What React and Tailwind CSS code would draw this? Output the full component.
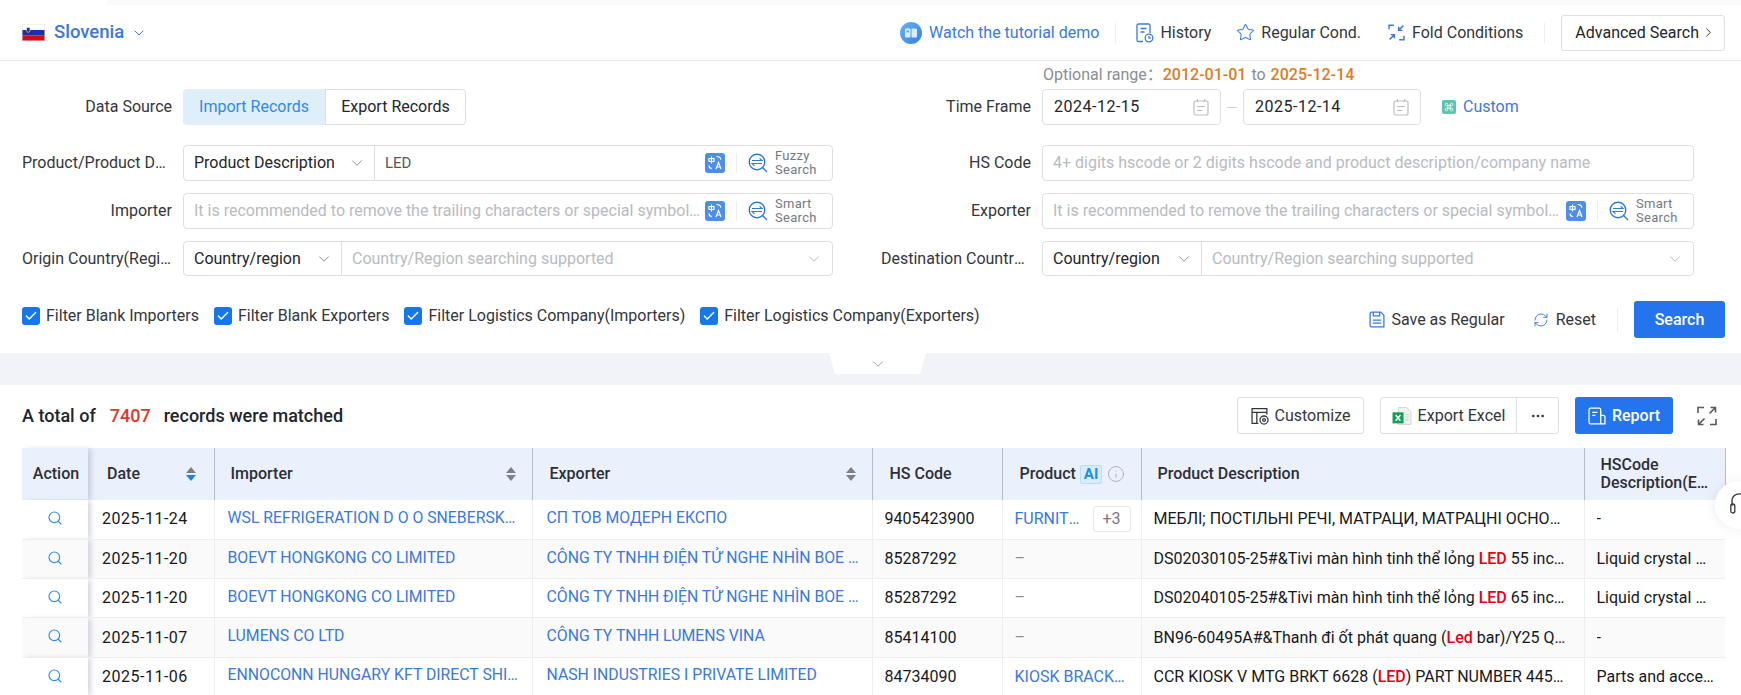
import { ChevronDown, ChevronRight, Search, Ellipsis, Info, Star, RefreshCw, Check, Command } from "lucide-react";

function Flag() {
  return (
    <svg width="23" height="17" viewBox="0 0 23 17" className="shrink-0">
      <rect width="23" height="17" fill="#e5e5e5" />
      <rect x="0.5" y="0.5" width="22" height="5.5" fill="#fff" />
      <rect x="0.5" y="6" width="22" height="5.5" fill="#1c2fa8" />
      <rect x="0.5" y="11.5" width="22" height="5" fill="#d20c14" />
      <path d="M4.500 3.500h3.500v3c0 1-1 1.500-1.750 2C5.500 8 4.500 7.500 4.500 6.500z" fill="#1c2fa8" stroke="#fff" strokeWidth="0.6" />
    </svg>
  );
}

function WatchIcon() {
  return (
    <svg width="22" height="22" viewBox="0 0 22 22" className="shrink-0">
      <defs>
        <linearGradient id="watchGrad" x1="0" y1="0" x2="1" y2="1">
          <stop offset="0" stopColor="#6db3f2" />
          <stop offset="1" stopColor="#2f7fe8" />
        </linearGradient>
      </defs>
      <circle cx="11" cy="11" r="11" fill="url(#watchGrad)" />
      <rect x="5" y="6.500" width="5.500" height="9" rx="1" fill="#dcecfc" />
      <rect x="11.500" y="6.500" width="5.500" height="9" rx="1" fill="#dcecfc" />
      <rect x="6.500" y="8.500" width="2.500" height="2" fill="#5fa5ee" />
    </svg>
  );
}

function HistoryIcon() {
  return (
    <svg width="18" height="20" viewBox="0 0 18 20" fill="none" stroke="#3b78dc" strokeWidth="1.300" className="shrink-0">
      <path d="M7 18.500H2.500a1.500 1.500 0 0 1-1.500-1.500V2.500A1.500 1.500 0 0 1 2.500 1h10A1.500 1.500 0 0 1 14 2.500V10" />
      <path d="M4.500 5.500h6M4.500 9h4" />
      <circle cx="13" cy="15" r="3.800" />
      <path d="M13 13v2.200h1.800" />
    </svg>
  );
}

function FoldIcon() {
  return (
    <svg width="17" height="17" viewBox="0 0 16 16" fill="none" stroke="#3b78dc" strokeWidth="1.400" className="shrink-0">
      <path d="M1 5V1.200h4.500M15 11v3.800h-4.500" />
      <path d="M14.500 1.500L10 6M10 2.500V6h3.500" />
      <path d="M1.500 14.500L6 10M6 13.500V10H2.500" />
    </svg>
  );
}

function ExpandIcon() {
  return (
    <svg width="20" height="20" viewBox="0 0 20 20" fill="none" stroke="#55595f" strokeWidth="1.600" className="shrink-0">
      <path d="M1 7V1.500h6" />
      <path d="M19 13v5.500h-6" />
      <path d="M12.500 7.500L18.500 1.500M13.500 1.500h5v5" />
      <path d="M7.500 12.500L1.500 18.500M6.500 18.500h-5v-5" />
    </svg>
  );
}

function TranslateIcon() {
  return (
    <div className="w-5 h-5 rounded-[3px] bg-[#4d8ee8] flex items-center justify-center shrink-0">
      <svg width="16" height="16" viewBox="0 0 16 16" fill="none" stroke="#fff" strokeWidth="1.200">
        <path d="M2 3.500h5v3H2zM4.500 1.500v7M2 10.500c0 2 1 3 3 3M9.500 1.500c2.500 0 4 1 4.500 3" />
        <path d="M9 14l2.500-6.500L14 14M10 12h3" />
      </svg>
    </div>
  );
}

function MatchIcon() {
  return (
    <svg width="20" height="20" viewBox="0 0 20 20" fill="none" stroke="#2f79dc" strokeWidth="1.400" className="shrink-0">
      <circle cx="9" cy="9" r="7.800" />
      <path d="M14.500 14.500L19 19" />
      <path d="M4 7.500h10l-2.500-2.300M14 10.500H4l2.500 2.300" strokeWidth="1.100" />
    </svg>
  );
}

function CalendarIcon() {
  return (
    <svg width="16" height="18" viewBox="0 0 16 18" fill="none" stroke="#b9bcc1" strokeWidth="1.200" className="shrink-0">
      <rect x="1" y="3" width="14" height="14" rx="1.500" />
      <path d="M4.500 1v3M11.500 1v3M4 8.500h8M4 12.500h5" />
    </svg>
  );
}

function SaveIcon() {
  return (
    <svg width="16" height="17" viewBox="0 0 15 16" fill="none" stroke="#3b78dc" strokeWidth="1.200" className="shrink-0">
      <path d="M1 2.500A1.500 1.500 0 0 1 2.500 1H11l3 3v10.500a.5.5 0 0 1-.5.5h-11A1.500 1.500 0 0 1 1 13.500z" />
      <path d="M4 1v3.500h6V1M3.500 8.500h8M3.500 11.500h8" />
    </svg>
  );
}

function CustomizeIcon() {
  return (
    <svg width="18" height="18" viewBox="0 0 17 17" fill="none" stroke="#33363b" strokeWidth="1.200" className="shrink-0">
      <path d="M7 15.500H1V1.500h14V7M1 5h14M5.500 5v10.500" />
      <circle cx="12.300" cy="12.300" r="3.800" />
      <circle cx="12.300" cy="12.300" r="1.300" />
    </svg>
  );
}

function ExcelIcon() {
  return (
    <svg width="20" height="20" viewBox="0 0 19 19" className="shrink-0">
      <path d="M6 1.500h8l4 4v12H6z" fill="#f2f4f3" stroke="#c9cdcb" strokeWidth="0.800" />
      <path d="M12.500 8h3.500M12.500 10.500h3.500M12.500 13h3.500" stroke="#c2c6c4" strokeWidth="0.800" />
      <rect x="0.500" y="6" width="10.500" height="10.500" fill="#12a05c" />
      <path d="M3.500 8.500l4.500 5.500M8 8.500l-4.500 5.500" stroke="#fff" strokeWidth="1.300" />
    </svg>
  );
}

function ReportIcon() {
  return (
    <svg width="18" height="18" viewBox="0 0 17 17" fill="none" stroke="#fff" strokeWidth="1.200" className="shrink-0">
      <path d="M12 16H2.500A1.500 1.500 0 0 1 1 14.500v-12A1.500 1.500 0 0 1 2.500 1H10.500A1.500 1.500 0 0 1 12 2.500V16zM12 8h2.500A1.500 1.500 0 0 1 16 9.500V16h-4" />
      <path d="M4 5h5M4 8h3" />
    </svg>
  );
}

function SortIcon({ active }) {
  return (
    <div className="flex flex-col gap-[2px] items-center shrink-0">
      <div className="w-0 h-0 border-x-[5px] border-x-transparent border-b-[6px] border-b-[#7d8087]" />
      <div
        className={`w-0 h-0 border-x-[5px] border-x-transparent border-t-[6px] ${
          active ? "border-t-[#1e80e8]" : "border-t-[#7d8087]"
        }`}
      />
    </div>
  );
}

function FieldLabel({ children }) {
  return (
    <div className="w-[150px] shrink-0 text-right truncate text-[#33363b]">{children}</div>
  );
}

function SelectBox({ label, width }) {
  return (
    <div className={`flex items-center justify-between pl-[10px] pr-[8px] text-[#22252a] border-r border-[#dcdfe3] h-full shrink-0 ${width}`}>
      <span>{label}</span>
      <ChevronDown size={18} strokeWidth={1.200} className="text-[#7e8288]" />
    </div>
  );
}

function MatchButton({ label }) {
  return (
    <div className="flex items-center h-full shrink-0">
      <div className="w-5 flex justify-center mr-[11px] ml-[4px]">
        <TranslateIcon />
      </div>
      <div className="w-px h-5 bg-[#eceef0]" />
      <div className="flex items-center ml-[11px] w-[84px]">
        <MatchIcon />
        <div className="ml-[7px] text-[13px] leading-[14px] tracking-[0.3px] text-[#75797f]">
          {label}
          <br />
          Search
        </div>
      </div>
    </div>
  );
}

function InputRow({ placeholder, label }) {
  return (
    <div className="flex items-center flex-1 min-w-0 h-9 border border-[#dcdfe3] rounded-[4px] bg-white">
      <div className="flex-1 min-w-0 pl-[10px] truncate text-[#b8bbc0]">{placeholder}</div>
      <MatchButton label={label} />
    </div>
  );
}

function CountryRow({ selectWidth }) {
  return (
    <div className="flex items-center flex-1 min-w-0 h-[35px] border border-[#dcdfe3] rounded-[4px]">
      <SelectBox label="Country/region" width={selectWidth} />
      <div className="flex-1 px-[10px] truncate text-[#b8bbc0]">Country/Region searching supported</div>
      <ChevronDown size={18} strokeWidth={1.200} className="shrink-0 text-[#b0b3b8] mr-[9px]" />
    </div>
  );
}

function CheckItem({ children }) {
  return (
    <div className="flex items-center gap-[6px] whitespace-nowrap">
      <div className="w-[18px] h-[18px] rounded-[3px] bg-[#1677e8] flex items-center justify-center">
        <Check size={14} strokeWidth={2.400} className="text-white" />
      </div>
      <span className="text-[#33363b]">{children}</span>
    </div>
  );
}

const rows = [
  {
    date: "2025-11-24",
    importer: "WSL REFRIGERATION D O O SNEBERSKA CESTA",
    exporter: "СП ТОВ МОДЕРН ЕКСПО",
    hs: "9405423900",
    product: "FURNITURE",
    more: "+3",
    desc: ["МЕБЛІ; ПОСТІЛЬНІ РЕЧІ, МАТРАЦИ, МАТРАЦНІ ОСНОВИ, ПОДУШКИ"],
    hsDesc: "-",
  },
  {
    date: "2025-11-20",
    importer: "BOEVT HONGKONG CO LIMITED",
    exporter: "CÔNG TY TNHH ĐIỆN TỬ NGHE NHÌN BOE VIỆT NAM",
    hs: "85287292",
    product: "",
    desc: ["DS02030105-25#&Tivi màn hình tinh thể lỏng ", "LED", " 55 inches model"],
    hsDesc: "Liquid crystal display",
  },
  {
    date: "2025-11-20",
    importer: "BOEVT HONGKONG CO LIMITED",
    exporter: "CÔNG TY TNHH ĐIỆN TỬ NGHE NHÌN BOE VIỆT NAM",
    hs: "85287292",
    product: "",
    desc: ["DS02040105-25#&Tivi màn hình tinh thể lỏng ", "LED", " 65 inches model"],
    hsDesc: "Liquid crystal display",
  },
  {
    date: "2025-11-07",
    importer: "LUMENS CO LTD",
    exporter: "CÔNG TY TNHH LUMENS VINA",
    hs: "85414100",
    product: "",
    desc: ["BN96-60495A#&Thanh đi ốt phát quang (", "Led", " bar)/Y25 QLED model part"],
    hsDesc: "-",
  },
  {
    date: "2025-11-06",
    importer: "ENNOCONN HUNGARY KFT DIRECT SHIPMENT",
    exporter: "NASH INDUSTRIES I PRIVATE LIMITED",
    hs: "84734090",
    product: "KIOSK BRACKET",
    desc: ["CCR KIOSK V MTG BRKT 6628 (", "LED", ") PART NUMBER 445-0123456"],
    hsDesc: "Parts and accessories",
  },
];

function App() {
  return (
    <div className="relative h-[695px] overflow-hidden bg-white font-['Roboto','Noto_Sans_CJK_SC',sans-serif] text-[16px] text-[#33363b]">
      <div className="h-[5px] ml-[107px] bg-[#fafafa]" />

      <header className="flex items-center justify-between h-[56px] pl-[22px] pr-4 border-b border-[#e8e9eb]">
        <div className="flex items-center">
          <Flag />
          <span className="ml-[9px] text-[18.500px] font-medium text-[#3b78dc]">Slovenia</span>
          <ChevronDown size={16} strokeWidth={1.500} className="ml-[7px] text-[#3b78dc]" />
        </div>
        <div className="flex items-center">
          <WatchIcon />
          <span className="ml-[7px] text-[#3b78dc]">Watch the tutorial demo</span>
          <div className="w-px h-5 bg-[#eceef0] mx-[16px]" />
          <div className="ml-[4px]"><HistoryIcon /></div>
          <span className="ml-[6px]">History</span>
          <Star size={19} strokeWidth={1.300} className="ml-[25px] text-[#3b78dc]" />
          <span className="ml-[6px]">Regular Cond.</span>
          <div className="ml-[27px]"><FoldIcon /></div>
          <span className="ml-[7px]">Fold Conditions</span>
          <div className="w-px h-5 bg-[#eceef0] ml-[21px] mr-[16px]" />
          <div className="flex items-center h-9 pl-[13px] pr-[8px] border border-[#dcdfe3] rounded-[3px] text-[#22252a]">
            Advanced Search
            <ChevronRight size={15} strokeWidth={1.500} className="ml-[2px]" />
          </div>
        </div>
      </header>

      <section className="flex justify-between pl-[22px] pr-[47px] h-[292px]">
        <div className="w-[811px] pt-[28px] flex flex-col">
          <div className="flex items-center gap-[11px] h-9">
            <FieldLabel>Data Source</FieldLabel>
            <div className="flex h-9 rounded-[4px]">
              <div className="flex items-center w-[142px] justify-center bg-[#deeffa] text-[#2e8ae6] rounded-l-[4px]">
                Import Records
              </div>
              <div className="flex items-center w-[141px] justify-center border border-l border-[#dcdfe3] rounded-r-[4px] text-[#22252a]">
                Export Records
              </div>
            </div>
          </div>

          <div className="flex items-center gap-[11px] mt-5">
            <FieldLabel>Product/Product Description</FieldLabel>
            <div className="flex items-center flex-1 min-w-0 h-9 border border-[#dcdfe3] rounded-[4px]">
              <SelectBox label="Product Description" width="w-[191px]" />
              <div className="flex-1 px-[10px] text-[15px] text-[#55595f]">LED</div>
              <MatchButton label="Fuzzy" />
            </div>
          </div>

          <div className="flex items-center gap-[11px] mt-3">
            <FieldLabel>Importer</FieldLabel>
            <InputRow
              placeholder="It is recommended to remove the trailing characters or special symbols of the company name"
              label="Smart"
            />
          </div>

          <div className="flex items-center gap-[11px] mt-3">
            <FieldLabel>Origin Country(Region)</FieldLabel>
            <CountryRow selectWidth="w-[158px]" />
          </div>

          <div className="flex items-center gap-[15px] mt-[30px] h-5">
            <CheckItem>Filter Blank Importers</CheckItem>
            <CheckItem>Filter Blank Exporters</CheckItem>
            <CheckItem>Filter Logistics Company(Importers)</CheckItem>
            <CheckItem>Filter Logistics Company(Exporters)</CheckItem>
          </div>
        </div>

        <div className="w-[813px] flex flex-col">
          <div className="h-[20px] mt-[4px] ml-[162px] flex items-center leading-[20px] text-[#8a8e94]">
            Optional range：
            <span className="text-[#e07b1f] font-medium">2012-01-01</span>
            <span className="mx-[5px]">to</span>
            <span className="text-[#e07b1f] font-medium">2025-12-14</span>
          </div>

          <div className="flex items-center gap-[11px] mt-[4px]">
            <FieldLabel>Time Frame</FieldLabel>
            <div className="flex items-center">
              <div className="flex items-center justify-between w-[179px] h-9 px-[11px] border border-[#dcdfe3] rounded-[4px] text-[#22252a] tracking-[0.5px]">
                2024-12-15
                <CalendarIcon />
              </div>
              <div className="w-[10px] h-px bg-[#cfd2d6] mx-[6px]" />
              <div className="flex items-center justify-between w-[178px] h-9 px-[11px] border border-[#dcdfe3] rounded-[4px] text-[#22252a] tracking-[0.5px]">
                2025-12-14
                <CalendarIcon />
              </div>
            </div>
            <div className="flex items-center ml-[10px]">
              <div className="w-[14px] h-[14px] rounded-[2px] bg-[#5cc4b0] flex items-center justify-center">
                <Command size={10} strokeWidth={2} className="text-white" />
              </div>
              <span className="ml-[7px] text-[#3b78dc]">Custom</span>
            </div>
          </div>

          <div className="flex items-center gap-[11px] mt-5">
            <FieldLabel>HS Code</FieldLabel>
            <div className="flex items-center flex-1 min-w-0 h-9 px-[10px] border border-[#dcdfe3] rounded-[4px] text-[#b8bbc0]">
              <span className="truncate">4+ digits hscode or 2 digits hscode and product description/company name</span>
            </div>
          </div>

          <div className="flex items-center gap-[11px] mt-3">
            <FieldLabel>Exporter</FieldLabel>
            <InputRow
              placeholder="It is recommended to remove the trailing characters or special symbols of the company name"
              label="Smart"
            />
          </div>

          <div className="flex items-center gap-[11px] mt-3">
            <FieldLabel>Destination Country(Region)</FieldLabel>
            <CountryRow selectWidth="w-[159px]" />
          </div>

          <div className="flex items-center justify-end mt-[25px] -mr-[31px] h-[37px]">
            <SaveIcon />
            <span className="ml-[6px]">Save as Regular</span>
            <RefreshCw size={16} strokeWidth={1.400} className="ml-[28px] text-[#3b78dc]" />
            <span className="ml-[7px]">Reset</span>
            <div className="w-px h-6 bg-[#eceef0] ml-[21px] mr-[16px]" />
            <div className="flex items-center justify-center w-[91px] h-[37px] rounded-[3px] bg-[#2474ee] text-white font-medium">
              Search
            </div>
          </div>
        </div>
      </section>

      <div className="h-[32px] bg-[#f1f3f8] flex justify-center">
        <div className="w-[97px] h-[21px] bg-white [clip-path:polygon(0_0,100%_0,94%_100%,6%_100%)] flex items-center justify-center translate-x-[7px]">
          <ChevronDown size={18} strokeWidth={1} className="text-[#7e8288]" />
        </div>
      </div>

      <div className="flex items-center justify-between h-[63px] pl-[22px] pr-6 pb-[2px]">
        <div className="flex items-center text-[18px] font-medium text-[#22252a]">
          A total of
          <span className="ml-[14px] mr-[13px] text-[#e0382e]">7407</span>
          records were matched
        </div>
        <div className="flex items-center">
          <div className="flex items-center justify-center w-[127px] h-[37px] gap-[6px] border border-[#dcdfe3] rounded-[3px]">
            <CustomizeIcon />
            Customize
          </div>
          <div className="flex items-center h-[37px] ml-4 border border-[#dcdfe3] rounded-[3px]">
            <div className="flex items-center justify-center gap-[6px] w-[136px] h-full border-r border-[#dcdfe3]">
              <ExcelIcon />
              Export Excel
            </div>
            <div className="flex items-center justify-center w-[41px]">
              <Ellipsis size={16} className="text-[#33363b]" />
            </div>
          </div>
          <div className="flex items-center justify-center gap-[6px] w-[98px] h-[37px] ml-4 rounded-[3px] bg-[#2474ee] text-white font-medium">
            <ReportIcon />
            Report
          </div>
          <div className="ml-6"><ExpandIcon /></div>
        </div>
      </div>

      <div className="ml-[22px] w-[1703px]">
        <table className="w-full table-fixed border-collapse">
          <colgroup>
            <col className="w-[66px]" />
            <col className="w-[126px]" />
            <col className="w-[318px]" />
            <col className="w-[340px]" />
            <col className="w-[130px]" />
            <col className="w-[139px]" />
            <col className="w-[443px]" />
            <col className="w-[141px]" />
          </colgroup>
          <thead>
            <tr className="h-[52px] bg-[#eaf0fc] text-left font-medium text-[#2c2f35]">
              <th className="font-medium text-center pl-[2px] shadow-[4px_0_5px_-1px_rgba(90,100,130,0.25)]">Action</th>
              <th className="font-medium pl-[19px] pr-[18px] border-r border-[#b6bcc8]">
                <div className="flex items-center justify-between">Date<SortIcon active /></div>
              </th>
              <th className="font-medium pl-4 pr-4 border-r border-[#b6bcc8]">
                <div className="flex items-center justify-between">Importer<SortIcon /></div>
              </th>
              <th className="font-medium pl-[17px] pr-4 border-r border-[#b6bcc8]">
                <div className="flex items-center justify-between">Exporter<SortIcon /></div>
              </th>
              <th className="font-medium pl-[17px] border-r border-[#b6bcc8]">HS Code</th>
              <th className="font-medium pl-[17px] border-r border-[#b6bcc8]">
                <div className="flex items-center">
                  Product
                  <span className="ml-[4px] px-[3px] h-[19px] text-[15px] font-bold text-[#1e8fe0] bg-[#d9ecfb] border border-[#bcdcf5] rounded-[2px] flex items-center">AI</span>
                  <Info size={18} strokeWidth={1} className="ml-[5px] text-[#9a9ea4]" />
                </div>
              </th>
              <th className="font-medium pl-4 border-r border-[#b6bcc8]">Product Description</th>
              <th className="font-medium pl-4 pr-2 leading-[18px] border-r border-[#b6bcc8]">
                <div>HSCode</div>
                <div className="truncate">Description(English)</div>
              </th>
            </tr>
          </thead>
          <tbody>
            {rows.map((row, i) => (
              <tr key={i} className={`h-[39.300px] border-b border-[#eceef1] ${i % 2 === 1 ? "bg-[#fafafa]" : "bg-white"}`}>
                <td className="text-center shadow-[4px_0_5px_-1px_rgba(90,100,130,0.25)]">
                  <Search size={16} strokeWidth={1.700} className="inline-block -mt-[4px] text-[#2e8ae6]" />
                </td>
                <td className="pl-[14px] text-[#16181c] tracking-[0.5px] border-r border-[#eceef1]">{row.date}</td>
                <td className="pl-[13px] pr-[11px] border-r border-[#eceef1]">
                  <div className="truncate -mt-[3px] text-[15.800px] text-[#3b78dc]">{row.importer}</div>
                </td>
                <td className="pl-[14px] pr-[11px] border-r border-[#eceef1]">
                  <div className="truncate -mt-[3px] text-[15.800px] text-[#3b78dc]">{row.exporter}</div>
                </td>
                <td className="pl-3 text-[#16181c] border-r border-[#eceef1]">{row.hs}</td>
                <td className="pl-3 pr-[10px] border-r border-[#eceef1]">
                  {row.product ? (
                    <div className="flex items-center">
                      <span className="truncate flex-1 text-[#3b78dc]">{row.product}</span>
                      {row.more && (
                        <span className="ml-3 shrink-0 w-[38px] h-[26px] flex items-center justify-center border border-[#e6e8eb] rounded-[3px] text-[#75797f]">
                          {row.more}
                        </span>
                      )}
                    </div>
                  ) : (
                    <span className="text-[#8a8e94]">–</span>
                  )}
                </td>
                <td className="pl-3 pr-[17px] border-r border-[#eceef1]">
                  <div className="truncate text-[#16181c]">
                    {row.desc[0]}
                    {row.desc[1] && <span className="font-medium text-[#e60012]">{row.desc[1]}</span>}
                    {row.desc[2]}
                  </div>
                </td>
                <td className="pl-3 pr-[10px] text-[#16181c]">
                  <div className="truncate">{row.hsDesc}</div>
                </td>
              </tr>
            ))}
          </tbody>
        </table>
      </div>

      <div className="absolute left-[1715px] top-[481px] w-[48px] h-[48px] rounded-full bg-white shadow-[0_0_12px_rgba(120,130,160,0.15)] flex items-center pl-[15px]">
        <svg width="14" height="26" viewBox="0 0 14 26" fill="none" stroke="#33363b" strokeWidth="1.300">
          <path d="M2 14V9a7 7 0 0 1 12-5" />
          <rect x="0.800" y="12" width="4" height="9" rx="2" />
        </svg>
      </div>
    </div>
  );
}

export default App;
